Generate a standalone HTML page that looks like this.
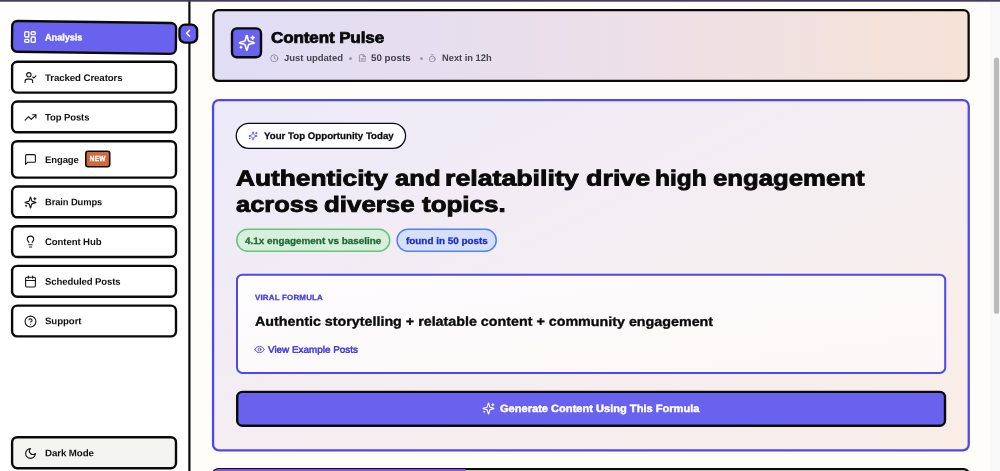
<!DOCTYPE html>
<html lang="en">
<head>
<meta charset="utf-8">
<title>Content Pulse</title>
<style>
*{box-sizing:border-box;margin:0;padding:0}
html,body{width:1000px;height:471px;overflow:hidden}
body{position:relative;background:#fffdf9;font-family:"Liberation Sans",Arial,sans-serif;color:#0a0a0a}
#bg{position:absolute;left:0;top:0}
#fg{position:absolute;left:0;top:0;width:1000px;height:471px;will-change:transform}
.abs{position:absolute;white-space:nowrap}
svg.ic{fill:none;stroke-linecap:round;stroke-linejoin:round;position:absolute}
.ni{position:absolute;left:24px;width:13px;height:13px;fill:none;stroke:#111;stroke-width:2;stroke-linecap:round;stroke-linejoin:round}
.ni.w{stroke:#fff;stroke-width:2.300;width:14px;height:14px;left:23.300px;margin-top:-1.200px}
.nl{position:absolute;left:45px;font-size:9.500px;font-weight:700;line-height:14px;color:#111;white-space:nowrap;letter-spacing:-0.100px;transform-origin:0 50%}
.nl.w{color:#fff;-webkit-text-stroke:0.300px #fff}
#chev{left:183.300px;top:28.400px;width:10.500px;height:10.500px;stroke:#fff;stroke-width:3.300}
#new{left:85px;top:152px;width:25.500px;text-align:center;font-size:6.500px;font-weight:700;line-height:14px;color:#fff;letter-spacing:0.200px;-webkit-text-stroke:0.300px #fff}
#hstar{left:237.700px;top:34.200px;width:17.600px;height:17.600px;stroke:#fff;stroke-width:2.200}
#htitle{left:270.500px;top:26px;font-size:15.400px;font-weight:700;line-height:22px;letter-spacing:-0.100px;-webkit-text-stroke:0.750px #0a0a0a;transform:translateY(0.700px) rotate(0.03deg) scaleX(1.106);transform-origin:0 50%}
.meta{position:absolute;top:51.800px;font-size:9.500px;font-weight:700;color:#45434f;line-height:12px;white-space:nowrap;transform-origin:0 50%}
.dot{position:absolute;top:56.700px;width:3px;height:3px;border-radius:50%;background:#9a96a8}
.mi{position:absolute;top:53.700px;width:8.600px;height:8.600px;fill:none;stroke:#7b7888;stroke-width:2;stroke-linecap:round;stroke-linejoin:round}
#pstar{left:247.600px;top:130.600px;width:10px;height:10px;stroke:#5a52ea;stroke-width:2}
#pt{left:263.700px;top:129px;font-size:9.500px;font-weight:700;line-height:12px;transform:translateY(0.900px) rotate(0.03deg) scaleX(1.02);transform-origin:0 50%;-webkit-text-stroke:0.250px #0a0a0a}
.hw{position:absolute;font-size:21.900px;font-weight:700;line-height:28px;white-space:nowrap;-webkit-text-stroke:0.850px #0a0a0a;transform-origin:0 50%}
.tt{position:absolute;top:234px;font-size:9.500px;font-weight:700;line-height:12px;white-space:nowrap;transform:translateY(0.900px) rotate(0.03deg) scaleX(1.04);transform-origin:0 50%;-webkit-text-stroke:0.300px currentColor}
#t1{left:245.200px;color:#1f6a33}
#t2{left:405.900px;color:#1c2fc8}
#vf{left:255px;top:292.500px;font-size:7.500px;font-weight:700;color:#4238e0;line-height:10px;letter-spacing:0.150px;transform:rotate(0.03deg) scaleX(1.065);transform-origin:0 50%;-webkit-text-stroke:0.250px #4238e0}
#formula{left:255px;top:312px;font-size:13px;font-weight:700;line-height:18px;-webkit-text-stroke:0.350px #0a0a0a;transform:translateY(0.700px) rotate(0.03deg) scaleX(1.099);transform-origin:0 50%}
#eye{left:254.400px;top:344.100px;width:11px;height:11px;stroke:#463ce0;stroke-width:1.900}
#view{left:268px;top:343px;font-size:9.500px;font-weight:400;color:#4238e0;line-height:12px;-webkit-text-stroke:0.500px #4238e0;transform:translateY(0.800px) rotate(0.03deg) scaleX(1.04);transform-origin:0 50%}
#cstar{left:481.500px;top:402.300px;width:13px;height:13px;stroke:#fff;stroke-width:2}
#ct{left:500.300px;top:402px;font-size:10.500px;font-weight:700;color:#fff;line-height:13px;-webkit-text-stroke:0.450px #fff;transform:rotate(0.03deg) scaleX(1.055);transform-origin:0 50%}
</style>
</head>
<body>
<svg id="bg" width="1000" height="471" viewBox="0 0 1000 471">
<rect x="0" y="0" width="188.3" height="471" fill="#ffffff"/>
<rect x="188.3" y="0" width="2.2" height="471" fill="#0a0a0a"/>
<g transform="rotate(0.8 94 37.4)"><rect x="12.10" y="22.00" width="163.90" height="30.80" rx="5.20" fill="#6962ef" stroke="#0a0a0a" stroke-width="2.40"/></g>
<rect x="12.10" y="61.80" width="163.90" height="30.80" rx="5.20" fill="#ffffff" stroke="#0a0a0a" stroke-width="2.40"/>
<rect x="12.10" y="101.50" width="163.90" height="30.80" rx="5.20" fill="#ffffff" stroke="#0a0a0a" stroke-width="2.40"/>
<rect x="12.10" y="141.20" width="163.90" height="36.40" rx="5.20" fill="#ffffff" stroke="#0a0a0a" stroke-width="2.40"/>
<rect x="12.10" y="186.50" width="163.90" height="30.80" rx="5.20" fill="#ffffff" stroke="#0a0a0a" stroke-width="2.40"/>
<rect x="12.10" y="226.20" width="163.90" height="30.80" rx="5.20" fill="#ffffff" stroke="#0a0a0a" stroke-width="2.40"/>
<rect x="12.10" y="265.90" width="163.90" height="30.80" rx="5.20" fill="#ffffff" stroke="#0a0a0a" stroke-width="2.40"/>
<rect x="12.10" y="305.60" width="163.90" height="30.80" rx="5.20" fill="#ffffff" stroke="#0a0a0a" stroke-width="2.40"/>
<rect x="12.10" y="437.20" width="163.90" height="31.00" rx="5.20" fill="#f4f4f3" stroke="#0a0a0a" stroke-width="2.40"/>
<rect x="179.50" y="24.60" width="17.60" height="18.00" rx="5.60" fill="#6962ef" stroke="#0a0a0a" stroke-width="2.40"/>
<rect x="85.80" y="151.30" width="23.90" height="15.40" rx="2.20" fill="#d2693c" stroke="#0a0a0a" stroke-width="1.60"/>
<defs><linearGradient id="gh" x1="0" y1="0" x2="1" y2="0"><stop offset="0" stop-color="#e0ddf6"/><stop offset="0.5" stop-color="#ebdfe9"/><stop offset="1" stop-color="#f6e2d6"/></linearGradient><linearGradient id="gc" gradientUnits="userSpaceOnUse" x1="450" y1="-5" x2="732" y2="556"><stop offset="0" stop-color="#edeaf9"/><stop offset="0.5" stop-color="#f4eef2"/><stop offset="1" stop-color="#f9ede6"/></linearGradient><linearGradient id="gi" x1="0" y1="0" x2="1" y2="1"><stop offset="0" stop-color="#fdfcff"/><stop offset="1" stop-color="#fbf7f5"/></linearGradient></defs>
<rect x="213.35" y="10.05" width="755.30" height="70.80" rx="5.25" fill="url(#gh)" stroke="#0a0a0a" stroke-width="2.30"/>
<rect x="232.00" y="28.40" width="29.00" height="28.80" rx="4.80" fill="#6962ef" stroke="#0a0a0a" stroke-width="2.40"/>
<rect x="213.05" y="100.05" width="755.70" height="350.30" rx="5.85" fill="url(#gc)" stroke="#4f47ee" stroke-width="2.30"/>
<rect x="236.25" y="123.35" width="169.30" height="25.00" rx="12.55" fill="#fefdff" stroke="#0a0a0a" stroke-width="1.30"/>
<rect x="236.75" y="229.35" width="153.00" height="21.80" rx="10.90" fill="#d6f0dc" stroke="#68c479" stroke-width="1.50"/>
<rect x="397.05" y="229.35" width="99.20" height="21.80" rx="10.90" fill="#d6e0fa" stroke="#5481f2" stroke-width="1.50"/>
<rect x="237.00" y="274.70" width="708.20" height="98.20" rx="5.40" fill="url(#gi)" stroke="#4f47ee" stroke-width="2.00"/>
<rect x="237.20" y="391.90" width="707.80" height="33.80" rx="5.20" fill="#6962ef" stroke="#0a0a0a" stroke-width="2.40"/>
<clipPath id="cn"><rect x="213.2" y="469.1" width="755.4" height="40" rx="5.2"/></clipPath>
<rect x="213.20" y="469.10" width="755.50" height="39.70" rx="5.20" fill="#ffffff" stroke="#0a0a0a" stroke-width="2.40"/>
<rect x="213" y="468" width="252.3" height="10" fill="#8b50e6" clip-path="url(#cn)"/>
<rect x="990.8" y="0" width="9.2" height="471" fill="#f9f9f9"/><rect x="990.8" y="0" width="0.7" height="471" fill="#f1f1f1"/>
<rect x="993.9" y="57.4" width="5.2" height="256.4" rx="2.6" fill="#bababa"/>
<rect x="0" y="0" width="1000" height="1.7" fill="#453a63"/>
</svg>
<div id="fg">
<svg class="ni w" style="top:31.1px" viewBox="0 0 24 24"><rect x="3" y="3" width="7" height="9" rx="1.500"/><rect x="14" y="3" width="7" height="5" rx="1.500"/><rect x="14" y="12" width="7" height="9" rx="1.500"/><rect x="3" y="16" width="7" height="5" rx="1.500"/></svg><span class="nl w" id="n1" style="top:30px;transform:translateY(0.60px) rotate(0.03deg) scaleX(0.975)">Analysis</span>
<svg class="ni" style="top:71.4px" viewBox="0 0 24 24"><path d="M16 21v-2a4 4 0 0 0-4-4H6a4 4 0 0 0-4 4v2"/><circle cx="9" cy="7" r="4"/><path d="M16 11l2 2 4-4"/></svg><span class="nl" id="n2" style="top:70px;transform:translateY(0.90px) rotate(0.03deg) scaleX(1.020)">Tracked Creators</span>
<svg class="ni" style="top:111.0px" viewBox="0 0 24 24"><path d="M22 7l-8.500 8.500-5-5L2 17"/><path d="M16 7h6v6"/></svg><span class="nl" id="n3" style="top:110px;transform:translateY(0.50px) rotate(0.03deg) scaleX(1.000)">Top Posts</span>
<svg class="ni" style="top:153.4px" viewBox="0 0 24 24"><path d="M21 15a2 2 0 0 1-2 2H7l-4 4V5a2 2 0 0 1 2-2h14a2 2 0 0 1 2 2z"/></svg><span class="nl" id="n4" style="top:152px;transform:translateY(0.90px) rotate(0.03deg) scaleX(1.000)">Engage</span>
<svg class="ni" style="top:195.8px" viewBox="0 0 24 24"><path d="M9.937 15.500A2 2 0 0 0 8.500 14.063l-6.135-1.582a.5.5 0 0 1 0-.962L8.500 9.936A2 2 0 0 0 9.937 8.500l1.582-6.135a.5.5 0 0 1 .963 0L14.063 8.500A2 2 0 0 0 15.500 9.937l6.135 1.581a.5.5 0 0 1 0 .964L15.500 14.063a2 2 0 0 0-1.437 1.437l-1.582 6.135a.5.5 0 0 1-.963 0z"/><path d="M20 3v4M22 5h-4M4 17v2M5 18H3"/></svg><span class="nl" id="n5" style="top:195px;transform:translateY(0.30px) rotate(0.03deg) scaleX(0.985)">Brain Dumps</span>
<svg class="ni" style="top:235.4px" viewBox="0 0 24 24"><path d="M15 14c.2-1 .7-1.700 1.500-2.500 1-.9 1.500-2.200 1.500-3.500A6 6 0 0 0 6 8c0 1 .2 2.200 1.500 3.500.7.700 1.300 1.500 1.500 2.500"/><path d="M9 18h6M10 22h4"/></svg><span class="nl" id="n6" style="top:234px;transform:translateY(0.90px) rotate(0.03deg) scaleX(1.010)">Content Hub</span>
<svg class="ni" style="top:275.2px" viewBox="0 0 24 24"><rect x="3" y="4" width="18" height="18" rx="2"/><path d="M8 2v4M16 2v4M3 10h18"/></svg><span class="nl" id="n7" style="top:274px;transform:translateY(0.70px) rotate(0.03deg) scaleX(1.005)">Scheduled Posts</span>
<svg class="ni" style="top:314.8px" viewBox="0 0 24 24"><circle cx="12" cy="12" r="10"/><path d="M9.100 9a3 3 0 0 1 5.800 1c0 2-3 3-3 3M12 17h.01"/></svg><span class="nl" id="n8" style="top:314px;transform:translateY(0.30px) rotate(0.03deg) scaleX(1.020)">Support</span>
<svg class="ni" style="top:446.8px" viewBox="0 0 24 24"><path d="M12 3a6 6 0 0 0 9 9 9 9 0 1 1-9-9z"/></svg><span class="nl" id="n9" style="top:446px;transform:translateY(0.30px) rotate(0.03deg) scaleX(1.025)">Dark Mode</span>
<svg id="chev" class="ic" viewBox="0 0 24 24"><path d="M15 5l-7 7 7 7"/></svg>
<div id="new" class="abs">NEW</div>
<svg id="hstar" class="ic" viewBox="0 0 24 24"><path d="M9.937 15.500A2 2 0 0 0 8.500 14.063l-6.135-1.582a.5.5 0 0 1 0-.962L8.500 9.936A2 2 0 0 0 9.937 8.500l1.582-6.135a.5.5 0 0 1 .963 0L14.063 8.500A2 2 0 0 0 15.500 9.937l6.135 1.581a.5.5 0 0 1 0 .964L15.500 14.063a2 2 0 0 0-1.437 1.437l-1.582 6.135a.5.5 0 0 1-.963 0z"/><path d="M20 3v4M22 5h-4M4 17v2M5 18H3"/></svg>
<div id="htitle" class="abs">Content Pulse</div>
<svg class="mi" style="left:270px" viewBox="0 0 24 24"><circle cx="12" cy="12" r="10"/><path d="M12 6v6l4 2"/></svg>
<div class="meta" id="m1" style="left:284px">Just updated</div>
<div class="dot" style="left:349px"></div>
<svg class="mi" style="left:358px" viewBox="0 0 24 24"><path d="M15 2H6a2 2 0 0 0-2 2v16a2 2 0 0 0 2 2h12a2 2 0 0 0 2-2V7z"/><path d="M14 2v5h6M9 13h6M9 17h6"/></svg>
<div class="meta" id="m2" style="left:371px;transform:rotate(0.03deg) scaleX(1.03)">50 posts</div>
<div class="dot" style="left:420px"></div>
<svg class="mi" style="left:428px" viewBox="0 0 24 24"><circle cx="12" cy="14" r="8"/><path d="M10 2h4M12 14l3-3"/></svg>
<div class="meta" id="m3" style="left:442px;transform:rotate(0.03deg) scaleX(0.98)">Next in 12h</div>
<svg id="pstar" class="ic" viewBox="0 0 24 24"><path d="M9.937 15.500A2 2 0 0 0 8.500 14.063l-6.135-1.582a.5.5 0 0 1 0-.962L8.500 9.936A2 2 0 0 0 9.937 8.500l1.582-6.135a.5.5 0 0 1 .963 0L14.063 8.500A2 2 0 0 0 15.500 9.937l6.135 1.581a.5.5 0 0 1 0 .964L15.500 14.063a2 2 0 0 0-1.437 1.437l-1.582 6.135a.5.5 0 0 1-.963 0z"/><path d="M20 3v4M22 5h-4M4 17v2M5 18H3"/></svg>
<div id="pt" class="abs">Your Top Opportunity Today</div>
<div class="hw" id="ha0" style="left:236.09px;top:164px;transform:translateY(0.40px) rotate(0.03deg) scaleX(1.2012)">Authenticity</div>
<div class="hw" id="ha1" style="left:395.12px;top:164px;transform:translateY(0.40px) rotate(0.03deg) scaleX(1.1701)">and</div>
<div class="hw" id="ha2" style="left:445.28px;top:164px;transform:translateY(0.40px) rotate(0.03deg) scaleX(1.2206)">relatability</div>
<div class="hw" id="ha3" style="left:585.79px;top:164px;transform:translateY(0.40px) rotate(0.03deg) scaleX(1.2290)">drive</div>
<div class="hw" id="ha4" style="left:654.75px;top:164px;transform:translateY(0.40px) rotate(0.03deg) scaleX(1.1186)">high</div>
<div class="hw" id="ha5" style="left:712.85px;top:164px;transform:translateY(0.40px) rotate(0.03deg) scaleX(1.1748)">engagement</div>
<div class="hw" id="hb0" style="left:236.13px;top:190px;transform:translateY(0.80px) rotate(0.03deg) scaleX(1.1627)">across</div>
<div class="hw" id="hb1" style="left:323.81px;top:190px;transform:translateY(0.80px) rotate(0.03deg) scaleX(1.1819)">diverse</div>
<div class="hw" id="hb2" style="left:421.68px;top:190px;transform:translateY(0.80px) rotate(0.03deg) scaleX(1.1859)">topics.</div>
<div id="t1" class="tt">4.1x engagement vs baseline</div>
<div id="t2" class="tt">found in 50 posts</div>
<div id="vf" class="abs">VIRAL FORMULA</div>
<div id="formula" class="abs">Authentic storytelling + relatable content + community engagement</div>
<svg id="eye" class="ic" viewBox="0 0 24 24"><path d="M2.062 12.348a1 1 0 0 1 0-.696 10.750 10.750 0 0 1 19.876 0 1 1 0 0 1 0 .696 10.750 10.750 0 0 1-19.876 0"/><circle cx="12" cy="12" r="3"/></svg>
<div id="view" class="abs">View Example Posts</div>
<svg id="cstar" class="ic" viewBox="0 0 24 24"><path d="M9.937 15.500A2 2 0 0 0 8.500 14.063l-6.135-1.582a.5.5 0 0 1 0-.962L8.500 9.936A2 2 0 0 0 9.937 8.500l1.582-6.135a.5.5 0 0 1 .963 0L14.063 8.500A2 2 0 0 0 15.500 9.937l6.135 1.581a.5.5 0 0 1 0 .964L15.500 14.063a2 2 0 0 0-1.437 1.437l-1.582 6.135a.5.5 0 0 1-.963 0z"/><path d="M20 3v4M22 5h-4M4 17v2M5 18H3"/></svg>
<div id="ct" class="abs">Generate Content Using This Formula</div>
</div>
</body>
</html>
